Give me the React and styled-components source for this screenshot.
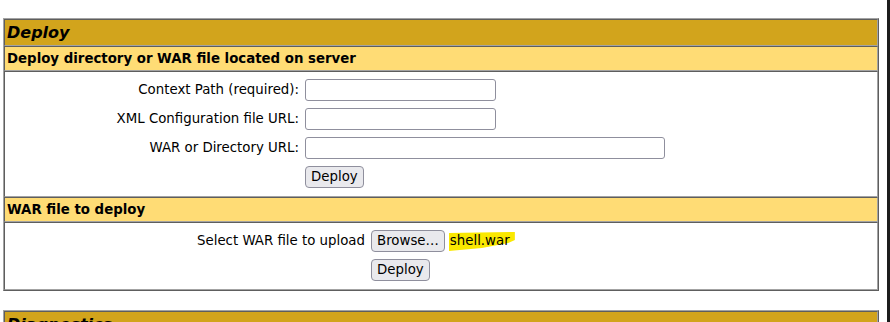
import React from 'react'
import styled, { createGlobalStyle } from 'styled-components'

const GlobalStyle = createGlobalStyle`
  html, body {
    margin: 0;
    padding: 0;
    overflow: hidden;
    background: #fff;
  }
  body {
    font-family: 'DejaVu Sans', 'Noto Sans', sans-serif;
    color: #000;
  }
`

const LIGHT = '#a3a3a3'
const DARK = '#5e5e5e'

const Page = styled.div`
  display: flex;
  width: 890px;
  height: 322px;
`

const Content = styled.div`
  flex: 1;
  padding: 18px 0 0 3px;
`

const Edge = styled.div`
  width: 3px;
  background: #1c1c1c;
`

const Table = styled.div`
  width: 876px;
  box-sizing: border-box;
  display: flex;
  flex-direction: column;
  border: 1px solid;
  border-color: ${LIGHT} ${DARK} ${DARK} ${LIGHT};
  & + & {
    margin-top: 19px;
  }
`

const Cell = styled.div`
  border: 1px solid;
  border-color: ${DARK} ${LIGHT} ${LIGHT} ${DARK};
`

const TitleCell = styled(Cell)`
  background: #d2a41c;
  padding: 3px 2px;
  font-size: 16px;
  line-height: 19px;
  font-weight: bold;
  font-style: italic;
`

const HeaderCell = styled(Cell)`
  background: #ffdc75;
  padding: 3px 2px;
  font-size: 13.333px;
  line-height: 17px;
  font-weight: bold;
`

const BodyCell = styled(Cell)`
  padding: 7px 0 8px;
`

const Form = styled.div`
  display: grid;
  grid-template-columns: ${p => p.$labelWidth}px auto;
  column-gap: ${p => p.$gap}px;
  row-gap: 7px;
  align-items: center;
  justify-items: start;
`

const Label = styled.div`
  justify-self: end;
  font-size: 13.333px;
  line-height: 16px;
  white-space: nowrap;
`

const Input = styled.div`
  box-sizing: border-box;
  width: ${p => p.$width}px;
  height: 22px;
  border: 1px solid #8f8f9d;
  border-radius: 3px;
  background: #fff;
`

const Button = styled.button`
  box-sizing: border-box;
  height: 22px;
  padding: 0 5px;
  margin: 0;
  font-family: 'DejaVu Sans', sans-serif;
  font-size: 13.333px;
  line-height: 18px;
  color: #000;
  background: #e9e9ed;
  border: 1px solid #8f8f9d;
  border-radius: 4px;
`

const FileRow = styled.div`
  display: flex;
  align-items: center;
  gap: 5px;
`

const FileName = styled.span`
  position: relative;
  font-size: 13.333px;
  line-height: 16px;
  z-index: 0;
  &::before {
    content: '';
    position: absolute;
    left: -1px;
    top: -1px;
    width: 66px;
    height: 19px;
    background: #fae800;
    clip-path: polygon(0 5%, 100% 0, 100% 42%, 90% 58%, 50% 84%, 0 100%);
    z-index: -1;
  }
`

const Spacer = styled.div``

export default function App () {
  return (
    <>
      <GlobalStyle />
      <Page>
        <Content>
          <Table>
            <TitleCell>Deploy</TitleCell>
            <HeaderCell>Deploy directory or WAR file located on server</HeaderCell>
            <BodyCell>
              <Form $labelWidth={294} $gap={6}>
                <Label>Context Path (required):</Label>
                <Input $width={191} />
                <Label>XML Configuration file URL:</Label>
                <Input $width={191} />
                <Label>WAR or Directory URL:</Label>
                <Input $width={360} />
                <Spacer />
                <Button>Deploy</Button>
              </Form>
            </BodyCell>
            <HeaderCell>WAR file to deploy</HeaderCell>
            <BodyCell>
              <Form $labelWidth={360} $gap={6}>
                <Label>Select WAR file to upload</Label>
                <FileRow>
                  <Button>Browse…</Button>
                  <FileName>shell.war</FileName>
                </FileRow>
                <Spacer />
                <Button>Deploy</Button>
              </Form>
            </BodyCell>
          </Table>
          <Table>
            <TitleCell>Diagnostics</TitleCell>
          </Table>
        </Content>
        <Edge />
      </Page>
    </>
  )
}
